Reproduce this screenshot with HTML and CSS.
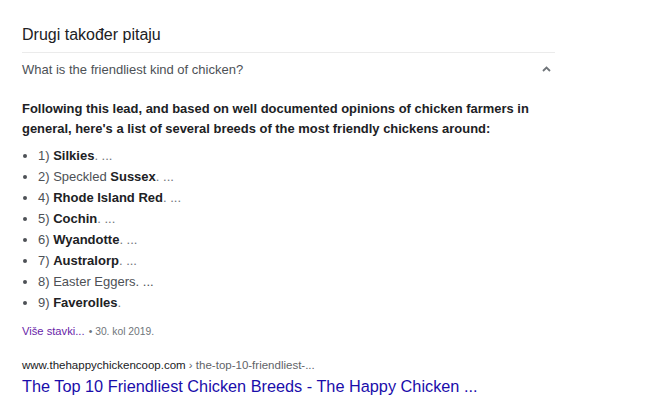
FILE: index.html
```html
<!DOCTYPE html>
<html lang="hr">
<head>
  <meta charset="UTF-8">
  <meta name="viewport" content="width=device-width, initial-scale=1.0">
  <title>Drugi također pitaju</title>
  <link rel="stylesheet" href="styles.css">
</head>
<body>
  <div class="related">
    <h2 class="related-title">Drugi također pitaju</h2>

    <div class="question">
      <span>What is the friendliest kind of chicken?</span>
      <svg class="chevron" width="9" height="6" viewBox="0 0 9 6">
        <path d="M1 5 L4.5 1.5 L8 5" fill="none" stroke="#70757a" stroke-width="1.8"/>
      </svg>
    </div>

    <div class="answer">
      <p class="lead">Following this lead, and based on well documented opinions of chicken farmers in general, here's a list of several breeds of the most friendly chickens around:</p>
      <ul class="breeds">
        <li>1) <b>Silkies</b><span class="more">. ...</span></li>
        <li>2) Speckled <b>Sussex</b><span class="more">. ...</span></li>
        <li>4) <b>Rhode Island Red</b><span class="more">. ...</span></li>
        <li>5) <b>Cochin</b><span class="more">. ...</span></li>
        <li>6) <b>Wyandotte</b><span class="more">. ...</span></li>
        <li>7) <b>Australorp</b><span class="more">. ...</span></li>
        <li>8) Easter Eggers. ...</li>
        <li>9) <b>Faverolles</b><span class="more">.</span></li>
      </ul>
      <div class="meta">
        <a href="#" class="more-link">Više stavki...</a>
        <span class="date">• 30. kol 2019.</span>
      </div>
    </div>

    <div class="result">
      <div class="cite">www.thehappychickencoop.com <span class="path">› the-top-10-friendliest-...</span></div>
      <a href="#" class="result-title">The Top 10 Friendliest Chicken Breeds - The Happy Chicken ...</a>
    </div>
  </div>
</body>
</html>
```

FILE: styles.css
```css
body {
  margin: 0;
  background-color: #fff;
  font-family: "Liberation Sans", Arial, sans-serif;
  color: #202124;
}
.related {
  width: 533px;
  padding: 25px 0 0 22px;
}
.related-title {
  margin: 0;
  font-size: 16px;
  font-weight: normal;
  line-height: 20px;
  color: #202124;
  padding-bottom: 7px;
  border-bottom: 1px solid #ebebeb;
}
.question {
  display: flex;
  justify-content: space-between;
  align-items: center;
  font-size: 13px;
  line-height: 20px;
  color: #4d5156;
  padding: 7px 0;
}
.chevron {
  margin: 0 4px 3px 0;
}
.answer {
  padding-top: 12px;
  font-size: 13px;
}
.lead {
  margin: 0;
  font-size: 12.95px;
  font-weight: bold;
  line-height: 20px;
  color: #202124;
}
.breeds {
  margin: 6px 0 0;
  padding-left: 16px;
  line-height: 21px;
  color: #4d5156;
}
.breeds b {
  color: #202124;
}
.more {
  color: #70757a;
}
.meta {
  margin-top: 9px;
  font-size: 11.2px;
  line-height: 18px;
}
.more-link {
  color: #681da8;
  text-decoration: none;
}
.date {
  color: #70757a;
  font-size: 10.3px;
  margin-left: 1px;
}
.result {
  margin-top: 15px;
}
.cite {
  font-size: 11.5px;
  line-height: 18px;
  color: #202124;
}
.cite .path {
  color: #5f6368;
}
.result-title {
  display: block;
  margin-top: 1px;
  font-size: 16.3px;
  line-height: 22px;
  color: #1a0dab;
  text-decoration: none;
}
```
